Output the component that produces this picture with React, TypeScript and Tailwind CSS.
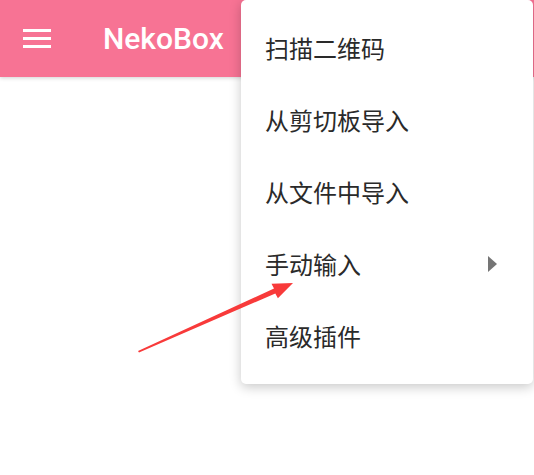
import React from 'react';

const items = [
  { label: '扫描二维码' },
  { label: '从剪切板导入' },
  { label: '从文件中导入' },
  { label: '手动输入', sub: true },
  { label: '高级插件' },
];

export default function App() {
  return (
    <div className="relative w-[534px] h-[475px] overflow-hidden bg-white" style={{ fontFamily: 'Roboto, "Noto Sans CJK SC", sans-serif' }}>
      <header className="h-[77px] bg-[#f77394] flex items-center shadow-[0_1px_4px_rgba(0,0,0,0.18)]">
        <div className="ml-[23px] w-[28px] flex flex-col gap-[5px]">
          <span className="block h-[3px] bg-white" />
          <span className="block h-[3px] bg-white" />
          <span className="block h-[3px] bg-white" />
        </div>
        <h1 className="ml-[52px] text-[30px] font-medium text-white leading-none">NekoBox</h1>
      </header>

      <div className="absolute left-[241px] top-0 w-[292px] h-[384px] bg-white rounded-[5px] py-[12px] shadow-[0_3px_12px_rgba(0,0,0,0.22)]">
        {items.map((it) => (
          <div key={it.label} className="h-[72px] flex items-center pl-[24px] pr-[36px] justify-between">
            <span className="text-[24px] text-[#2a2a2a] leading-none" style={{ fontFamily: '"Noto Sans CJK SC", sans-serif' }}>
              {it.label}
            </span>
            {it.sub && (
              <svg width="9" height="16" viewBox="0 0 9 16" className="mt-[-1px]">
                <path d="M0 0 L9 8 L0 16 Z" fill="#757575" />
              </svg>
            )}
          </div>
        ))}
      </div>

      <svg className="absolute left-0 top-0 pointer-events-none" width="534" height="475" viewBox="0 0 534 475">
        <polygon
          points="138,351 274,288.6 271.5,283.7 293,283 277.9,298.3 275.3,293.4 139,352.5"
          fill="#f83a3a"
        />
      </svg>
    </div>
  );
}
